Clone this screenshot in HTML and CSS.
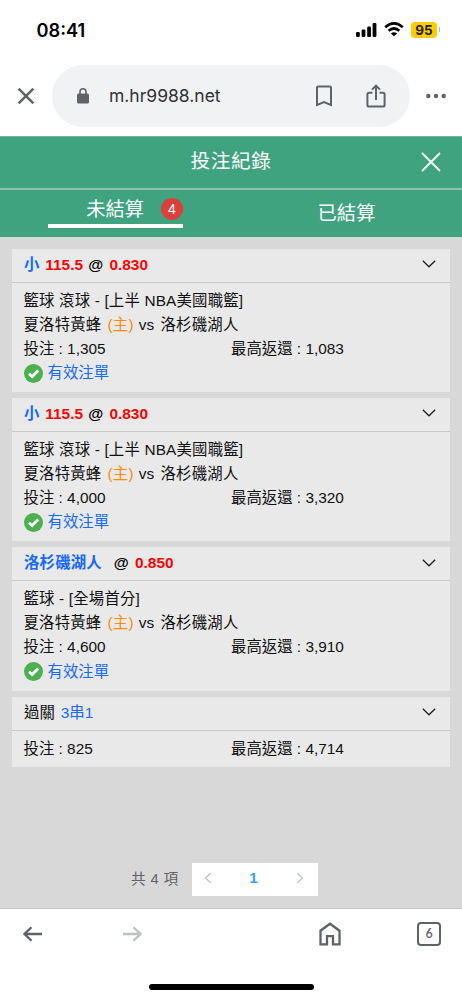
FILE: index.html
```html
<!DOCTYPE html>
<html lang="zh-Hant">
<head>
<meta charset="utf-8">
<meta name="viewport" content="width=device-width, initial-scale=1">
<title>投注紀錄</title>
<link rel="stylesheet" href="styles.css">
</head>
<body>
<div class="phone">
  <header class="status">
    <span class="clock">08:41</span>
    <div class="status-icons">
      <svg class="signal" width="21" height="14" viewBox="0 0 21 14"><rect x="0" y="9" width="3.800" height="5" rx="1.200"/><rect x="5.600" y="6.600" width="3.800" height="7.400" rx="1.200"/><rect x="11.200" y="3.500" width="3.800" height="10.500" rx="1.200"/><rect x="16.600" y="0" width="3.800" height="14" rx="1.200"/></svg>
      <svg class="wifi" width="20" height="15" viewBox="0 0 20 15"><path d="M1.200 5.300Q10-2.400 18.800 5.300M4.600 8.800Q10 4.200 15.400 8.800" fill="none" stroke="#000" stroke-width="2.700"/><path d="M10 14.200 6.900 11.400Q10 8.900 13.100 11.400Z"/></svg>
      <span class="battery">95</span><i class="battery-tip"></i>
    </div>
  </header>

  <div class="browser-bar">
    <svg class="stop" width="18" height="18" viewBox="0 0 18 18"><path d="M1.600 1.600 16.400 16.400M16.400 1.600 1.600 16.400"/></svg>
    <div class="address">
      <svg class="lock" width="12" height="16" viewBox="0 0 12 16"><rect x="0" y="5.500" width="12" height="10" rx="1.500" fill="#5f6368"/><path d="M3 6V3.800a3 3 0 0 1 6 0V6" fill="none" stroke="#5f6368" stroke-width="1.600"/></svg>
      <span class="url">m.hr9988.net</span>
      <svg class="bookmark" width="18" height="22" viewBox="0 0 18 22"><path d="M2 2.500a1 1 0 0 1 1-1h12a1 1 0 0 1 1 1V20L9 17 2 20Z"/></svg>
      <svg class="share" width="20" height="24" viewBox="0 0 20 24"><path d="M6.500 8.800H3a1.600 1.600 0 0 0-1.600 1.600v10.500A1.600 1.600 0 0 0 3 22.500h14a1.600 1.600 0 0 0 1.600-1.600V10.400A1.600 1.600 0 0 0 17 8.800h-3.500M10 16V2M6 5.600 10 1.600 14 5.600"/></svg>
    </div>
    <svg class="more" width="20" height="6" viewBox="0 0 20 6"><circle cx="2.300" cy="3" r="2.200"/><circle cx="10" cy="3" r="2.200"/><circle cx="17.700" cy="3" r="2.200"/></svg>
  </div>

  <div class="title-bar">
    <h1 class="title">投注紀錄</h1>
    <svg class="close" width="20" height="20" viewBox="0 0 20 20"><path d="M1 1 19 19M19 1 1 19"/></svg>
  </div>
  <nav class="tabs">
    <div class="tab"><div class="tab-active"><span>未結算</span><b class="count">4</b></div></div>
    <div class="tab tab-idle">已結算</div>
  </nav>

  <main class="records">
    <section class="card">
      <div class="card-head"><p class="pick"><span class="side">小</span><span class="red">115.5</span><span class="at">@</span><span class="red">0.830</span></p><svg class="chevron" width="14" height="8" viewBox="0 0 14 8"><path d="M.8.800 7 6.800 13.200.800"/></svg></div>
      <div class="card-body">
        <p class="line league">籃球 滾球 - [上半 NBA美國職籃]</p>
        <p class="line teams"><span>夏洛特黃蜂</span><span class="home">(主)</span><span class="versus">vs</span><span>洛杉磯湖人</span></p>
        <div class="line amounts"><span>投注 : 1,305</span><span>最高返還 : 1,083</span></div>
        <div class="line valid"><svg width="19" height="19" viewBox="0 0 19 19"><circle cx="9.500" cy="9.500" r="9.500" fill="#4caf50"/><path d="M5 9.700 8.200 12.600 14.200 6.600" fill="none" stroke="#fff" stroke-width="2.800"/></svg><span>有效注單</span></div>
      </div>
    </section>
    <section class="card">
      <div class="card-head"><p class="pick"><span class="side">小</span><span class="red">115.5</span><span class="at">@</span><span class="red">0.830</span></p><svg class="chevron" width="14" height="8" viewBox="0 0 14 8"><path d="M.8.800 7 6.800 13.200.800"/></svg></div>
      <div class="card-body">
        <p class="line league">籃球 滾球 - [上半 NBA美國職籃]</p>
        <p class="line teams"><span>夏洛特黃蜂</span><span class="home">(主)</span><span class="versus">vs</span><span>洛杉磯湖人</span></p>
        <div class="line amounts"><span>投注 : 4,000</span><span>最高返還 : 3,320</span></div>
        <div class="line valid"><svg width="19" height="19" viewBox="0 0 19 19"><circle cx="9.500" cy="9.500" r="9.500" fill="#4caf50"/><path d="M5 9.700 8.200 12.600 14.200 6.600" fill="none" stroke="#fff" stroke-width="2.800"/></svg><span>有效注單</span></div>
      </div>
    </section>
    <section class="card">
      <div class="card-head"><p class="pick"><span class="side team">洛杉磯湖人</span><span class="at">@</span><span class="red">0.850</span></p><svg class="chevron" width="14" height="8" viewBox="0 0 14 8"><path d="M.8.800 7 6.800 13.200.800"/></svg></div>
      <div class="card-body">
        <p class="line league">籃球 - [全場首分]</p>
        <p class="line teams"><span>夏洛特黃蜂</span><span class="home">(主)</span><span class="versus">vs</span><span>洛杉磯湖人</span></p>
        <div class="line amounts"><span>投注 : 4,600</span><span>最高返還 : 3,910</span></div>
        <div class="line valid"><svg width="19" height="19" viewBox="0 0 19 19"><circle cx="9.500" cy="9.500" r="9.500" fill="#4caf50"/><path d="M5 9.700 8.200 12.600 14.200 6.600" fill="none" stroke="#fff" stroke-width="2.800"/></svg><span>有效注單</span></div>
      </div>
    </section>
    <section class="card">
      <div class="card-head"><p class="pick parlay"><span>過關</span><span class="blue">3串1</span></p><svg class="chevron" width="14" height="8" viewBox="0 0 14 8"><path d="M.8.800 7 6.800 13.200.800"/></svg></div>
      <div class="card-body short">
        <div class="line amounts"><span>投注 : 825</span><span>最高返還 : 4,714</span></div>
      </div>
    </section>

    <div class="pagination">
      <span class="total">共 4 項</span>
      <div class="pager">
        <svg width="8" height="12" viewBox="0 0 8 12"><path d="M6.800 1 1.500 6 6.800 11"/></svg>
        <b class="page">1</b>
        <svg width="8" height="12" viewBox="0 0 8 12"><path d="M1.200 1 6.500 6 1.200 11"/></svg>
      </div>
    </div>
  </main>

  <footer class="toolbar">
    <div class="tools">
      <svg class="back" width="20" height="16" viewBox="0 0 20 16"><path d="M19 8H1.500M8.500 1.200 1.500 8 8.500 14.800"/></svg>
      <svg class="forward" width="20" height="16" viewBox="0 0 20 16"><path d="M1 8h17.500M11.500 1.200 18.500 8 11.500 14.800"/></svg>
      <svg class="home-icon" width="22" height="24" viewBox="0 0 22 24"><path d="M1.500 22.300V8.700L11 1.700 20.500 8.700V22.300H14V14.200H8V22.300Z"/></svg>
      <span class="tab-count">6</span>
    </div>
    <div class="home-indicator"></div>
  </footer>
</div>
</body>
</html>
```

FILE: styles.css
```css
* { box-sizing: border-box; }
body { margin: 0; background: #fff; }
h1, p { margin: 0; font-weight: 400; }
svg { display: block; flex: none; }
.phone {
  display: flex; flex-direction: column; width: 462px; height: 1000px; overflow: hidden;
  font-family: "Liberation Sans", "Noto Sans CJK TC", sans-serif;
  font-size: 15.4px; color: #111;
}

.status { display: flex; justify-content: space-between; height: 65px; padding: 18px 22px 0 36.500px; }
.clock { font: 600 18.200px/24px Inter, sans-serif; color: #000; }
.status-icons { display: flex; align-items: center; height: 23px; }
.signal { margin-right: 1px; }
.wifi { margin-left: 6px; }
.battery { width: 26px; height: 16px; margin-left: 7px; border-radius: 4px; background: #fc0; font: 700 13.500px/16px Inter, sans-serif; text-align: center; color: #222; }
.battery-tip { width: 1px; height: 5px; margin-left: 2px; background: #bbb; }

.browser-bar { display: flex; align-items: center; height: 71px; padding: 0 16px 9px 17px; }
.stop, .close, .bookmark, .share { fill: none; stroke: #5f6368; stroke-width: 2; }
.stop { stroke-width: 2.500; }
.address { display: flex; align-items: center; width: 358px; height: 62px; margin-left: 17px; padding-left: 25px; border-radius: 31px; background: #f0f2f4; }
.url { width: 206px; margin-left: 20px; font: 400 17.500px/24px Inter, sans-serif; color: #303134; }
.share { margin-left: 33px; }
.more { margin-left: 16px; fill: #5f6368; }

.title-bar { display: grid; grid-template-columns: 62px 1fr 62px; align-items: center; height: 54px; background: #40a380; border-top: 1px solid #6fb69a; border-bottom: 2px solid #90c3ae; }
.title { grid-column: 2; padding-bottom: 2px; text-align: center; font-size: 19.700px; letter-spacing: .6px; line-height: 49px; color: #fff; }
.close { margin: 0 0 2px 21px; stroke: #fff; stroke-width: 1.800; }
.tabs { display: grid; grid-template-columns: 1fr 1fr; height: 47px; background: #40a380; color: #fff; font-size: 19.300px; }
.tab { display: flex; justify-content: center; }
.tab-active { display: flex; align-items: center; justify-content: flex-end; width: 135px; height: 38px; padding-top: 2px; border-bottom: 4px solid #fff; }
.tab-idle { align-items: center; padding-bottom: 3px; }
.count { display: grid; place-items: center; width: 22px; height: 22px; margin: 2px 0 0 17px; border-radius: 50%; background: #db403c; font-size: 14px; font-weight: 400; }

.records { flex: 1; display: flex; flex-direction: column; gap: 5.800px; padding: 11.700px 12px 0; background: #d8d8d8; }
.card { height: 143.500px; flex: none; background: #e9e9e9; }
.card:nth-child(4) { height: 70px; }
.card-head { display: flex; align-items: center; justify-content: space-between; height: 34px; padding: 0 14px 1px 12px; border-bottom: 1px solid #c8c8c8; }
.pick { display: flex; line-height: 24px; font-weight: 700; }
.side { width: 21.300px; color: #1769ff; }
.team { width: 89.700px; letter-spacing: .2px; }
.red { color: #f00; }
.at { width: 21.300px; color: #000; }
.red + .at { margin-left: 5.200px; }
.parlay { gap: 6px; font-weight: 400; }
.blue { color: #1769ff; }
.chevron { margin-bottom: 1px; fill: none; stroke: #222; stroke-width: 1.300; }
.card-body { padding: 6px 12px 0 11.500px; }
.card-body.short { padding-top: 6px; }
.line { height: 24px; line-height: 24px; white-space: nowrap; }
.league { letter-spacing: .17px; }
.teams { display: flex; letter-spacing: .2px; }
.home { margin-left: 6px; color: #ff8c00; }
.versus { margin: 0 6px 0 5px; }
.amounts { display: grid; grid-template-columns: 207.500px 1fr; }
.valid { display: flex; align-items: center; gap: 5px; color: #1769ff; height: 25px; }

.pagination { display: flex; align-items: center; margin: auto 0 12px 119px; height: 33px; }
.total { width: 60.500px; padding-bottom: 3px; color: #606266; font-size: 14.700px; letter-spacing: .4px; }
.pager { display: flex; align-items: center; justify-content: space-between; width: 126px; height: 33px; padding: 0 14px 2px 12px; background: #fff; fill: none; stroke: #c0c4cc; stroke-width: 1.300; }
.page { color: #409eff; }

.toolbar { height: 92.500px; flex: none; border-top: 1px solid #c8c8c8; background: #fff; }
.tools { display: flex; align-items: center; height: 50px; padding: 0 21px 0 23px; fill: none; stroke: #5f6368; stroke-width: 2.300; }
.forward { margin-left: 79px; stroke: #bdc1c6; }
.home-icon { margin-left: 177px; }
.tab-count { display: grid; place-items: center; width: 24px; height: 24px; margin-left: auto; border: 2px solid #5f6368; border-radius: 4px; font: 600 12.500px/20px Lato, sans-serif; color: #5f6368; }
.home-indicator { width: 165px; height: 6px; margin: 25.500px auto 0; border-radius: 3px; background: #000; }
```
